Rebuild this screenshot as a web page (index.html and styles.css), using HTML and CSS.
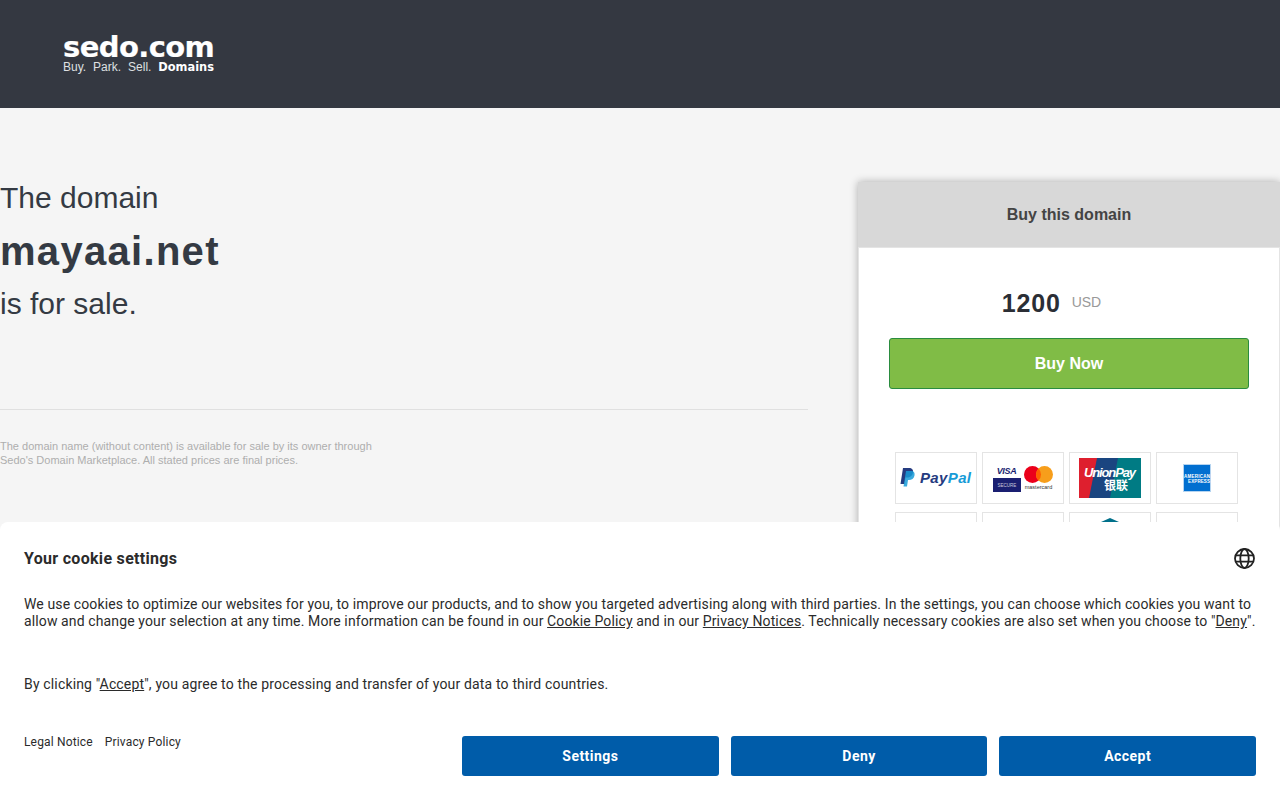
FILE: index.html
```html
<!DOCTYPE html>
<html lang="en">
<head>
<meta charset="utf-8">
<title>mayaai.net is for sale</title>
<link rel="stylesheet" href="styles.css">
</head>
<body>
<header class="site-header">
  <div class="logo">
    <div class="logo-name">sedo.com</div>
    <div class="logo-tag"><span>Buy.</span><span>Park.</span><span>Sell.</span><b>Domains</b></div>
  </div>
</header>
<main class="content">
  <section class="intro">
    <p class="intro-line">The domain</p>
    <h1 class="domain">mayaai.net</h1>
    <p class="intro-line intro-last">is for sale.</p>
    <hr class="rule">
    <p class="note">The domain name (without content) is available for sale by its owner through<br>Sedo's Domain Marketplace. All stated prices are final prices.</p>
  </section>
  <aside class="card">
    <div class="card-head">Buy this domain</div>
    <div class="card-body">
      <div class="price"><span class="amount">1200</span><span class="currency">USD</span></div>
      <a class="buy" href="#">Buy Now</a>
      <div class="pay-grid">
        <div class="pay">
          <svg width="72" height="20" viewBox="0 0 72 20"><path d="M3 0h6c3 0 4.500 2 4 4.500C12.500 8 10 9.500 7 9.500H5.500L4.500 16H0.500z" fill="#253b80"/><path d="M6 3h5c3 0 4 2 3.500 4.500C14 10.500 11.500 12 9 12H8l-1 6.500H3.500z" fill="#179bd7" opacity=".85"/><text x="20" y="15" class="pp-text" textLength="51"><tspan fill="#253b80">Pay</tspan><tspan fill="#179bd7">Pal</tspan></text></svg>
        </div>
        <div class="pay">
          <svg width="62" height="28" viewBox="0 0 62 28"><text x="4.700" y="10" class="visa" textLength="20">VISA</text><rect x="1" y="14" width="28" height="14" fill="#1a1f71"/><text x="15" y="23" class="secure">SECURE</text><circle cx="40.500" cy="10.500" r="8.500" fill="#eb001b"/><circle cx="52.500" cy="10.500" r="8.500" fill="#f79e1b"/><path d="M46.500 4.500a8.500 8.500 0 0 1 0 12 8.500 8.500 0 0 1 0-12z" fill="#ff5f00"/><text x="46.500" y="25" class="mc">mastercard</text></svg>
        </div>
        <div class="pay">
          <svg width="62" height="40" viewBox="0 0 62 40"><rect width="62" height="40" fill="#007b84"/><path d="M10 0h29l-8 40H2z" fill="#1a4580"/><path d="M0 0h18l-8 40H0z" fill="#de1f2e"/><text x="5" y="19" class="up-text" textLength="52">UnionPay</text><text x="25" y="32" class="up-cn">银联</text></svg>
        </div>
        <div class="pay">
          <svg width="28" height="28" viewBox="0 0 28 28"><rect x=".5" y=".5" width="27" height="27" fill="#016fd0" stroke="#b5d4f0"/><text x="1" y="13.500" class="amex" textLength="26">AMERICAN</text><text x="5" y="19" class="amex" textLength="22">EXPRESS</text></svg>
        </div>
        <div class="pay"></div>
        <div class="pay"></div>
        <div class="pay">
          <svg class="pay-top" width="18" height="12" viewBox="0 0 18 12"><path d="M9 0l9 4v8H0V4z" fill="#00708a"/></svg>
        </div>
        <div class="pay"></div>
      </div>
    </div>
  </aside>
</main>
<div class="cookie">
  <div class="cookie-top">
    <h2 class="cookie-title">Your cookie settings</h2>
    <svg class="globe" width="21" height="21" viewBox="0 0 21 21" fill="none" stroke="#222" stroke-width="1.800"><circle cx="10.500" cy="10.500" r="9.500"/><ellipse cx="10.500" cy="10.500" rx="4.200" ry="9.500"/><path d="M1.800 7.300h17.400M1.800 13.700h17.400"/></svg>
  </div>
  <p class="cookie-text">We use cookies to optimize our websites for you, to improve our products, and to show you targeted advertising along with third parties. In the settings, you can choose which cookies you want to allow and change your selection at any time. More information can be found in our <a href="#">Cookie Policy</a> and in our <a href="#">Privacy Notices</a>. Technically necessary cookies are also set when you choose to "<a href="#">Deny</a>".</p>
  <p class="cookie-text cookie-second">By clicking "<a href="#">Accept</a>", you agree to the processing and transfer of your data to third countries.</p>
  <div class="cookie-foot">
    <div class="cookie-links"><a href="#">Legal Notice</a><a href="#">Privacy Policy</a></div>
    <div class="cookie-btns">
      <button class="cbtn">Settings</button>
      <button class="cbtn">Deny</button>
      <button class="cbtn">Accept</button>
    </div>
  </div>
</div>
</body>
</html>
```
FILE: styles.css
```css
* { box-sizing: border-box; }
html, body { margin: 0; height: 800px; overflow: hidden; }
body { background: #f5f5f5; font-family: "Liberation Sans", Arial, sans-serif; color: #343a43; }

.site-header { height: 108px; background: #343841; padding: 33px 0 0 63px; }
.logo { width: 151px; color: #fff; }
.logo-name { font: bold 29px/28px "DejaVu Sans", sans-serif; letter-spacing: -0.6px; -webkit-text-stroke: .2px #fff; }
.logo-tag { display: flex; justify-content: space-between; font: 12px/13px "Liberation Sans", sans-serif; color: #dfe0e2; }
.logo-tag b { color: #fff; font: bold 11.400px/13px "DejaVu Sans", sans-serif; }

.content { display: flex; justify-content: space-between; padding-top: 74px; }
.intro { width: 808px; }
.intro-line { margin: 0; font-size: 30px; line-height: 32px; color: #343a43; }
.domain { margin: 17px 0 17px; font-size: 40px; line-height: 40px; font-weight: bold; letter-spacing: 1.300px; color: #343a43; }
.intro-last { margin-bottom: 89px; }
.rule { margin: 0 0 29px; border: 0; border-top: 1px solid #e0e0e0; }
.note { margin: 0; font-size: 11px; line-height: 14px; color: #aeaeae; }

.card { width: 422px; height: 420px; background: #fff; box-shadow: 0 0 8px rgba(0,0,0,.3); border: 1px solid #e4e4e4; border-top: 0; }
.card-head { height: 66px; background: #d8d8d8; border-bottom: 1px solid #e4e4e4; margin: 0 -1px; text-align: center; font-size: 16px; font-weight: bold; line-height: 65px; color: #444; }
.card-body { padding: 0 30px; }
.price { height: 90px; padding: 40px 35px 0 0; display: flex; justify-content: center; align-items: flex-start; gap: 11px; }
.amount { font-size: 25px; line-height: 30px; font-weight: bold; letter-spacing: .8px; color: #2b2e35; }
.currency { font-size: 14px; line-height: 28px; color: #999; }
.buy { display: block; height: 51px; background: #80bc46; border: 1px solid #2a8c3f; border-radius: 3px; color: #fff; font-size: 16px; font-weight: bold; line-height: 49px; text-align: center; text-decoration: none; }
.pay-grid { display: grid; grid-template-columns: repeat(4, 82px); gap: 8px 5px; margin: 63px 0 0 6px; }
.pay { height: 52px; border: 1px solid #e4e4e4; display: flex; align-items: center; justify-content: center; }
.pay-top { align-self: flex-start; margin-top: 5px; }
.pp-text { font: italic bold 15px "Liberation Sans", sans-serif; }
.visa { font: italic bold 9px "Liberation Sans", sans-serif; fill: #1a1f71; }
.secure { font: 4.500px "Liberation Sans", sans-serif; fill: #ccd; text-anchor: middle; }
.mc { font: 5.500px "Liberation Sans", sans-serif; fill: #333; text-anchor: middle; }
.up-text { font: italic bold 13px "Liberation Sans", sans-serif; fill: #fff; }
.up-cn { font: bold 12px "Noto Sans CJK SC", sans-serif; fill: #fff; }
.amex { font: bold 4.500px "Liberation Sans", sans-serif; fill: #fff; }

.cookie { position: fixed; left: 0; right: 0; bottom: 0; height: 278px; background: #fff; border-radius: 8px 8px 0 0; padding: 24px; font-family: Roboto, "Noto Sans", sans-serif; color: #2b2b2b; letter-spacing: .12px; }
.cookie-top { display: flex; justify-content: space-between; align-items: center; height: 24px; }
.globe { margin-right: 1px; }
.cookie-title { margin: 2px 0 0; font-size: 16px; font-weight: bold; line-height: 24px; letter-spacing: .3px; }
.cookie-text { margin: 26px 0 0; font-size: 14px; line-height: 17px; }
.cookie-text a, .cookie-links a { color: inherit; }
.cookie-second { margin-top: 46px; letter-spacing: .16px; }
.cookie-foot { display: flex; justify-content: space-between; align-items: flex-start; margin-top: 43px; }
.cookie-links { display: flex; gap: 12px; font-size: 12px; line-height: 13px; letter-spacing: .16px; }
.cookie-links a { text-decoration: none; }
.cookie-btns { display: flex; gap: 12px; width: 794px; }
.cbtn { flex: 1; height: 40px; border: 0; border-radius: 3px; background: #005ca9; color: #fff; font: bold 14px Roboto, "Noto Sans", sans-serif; letter-spacing: .45px; }
```
